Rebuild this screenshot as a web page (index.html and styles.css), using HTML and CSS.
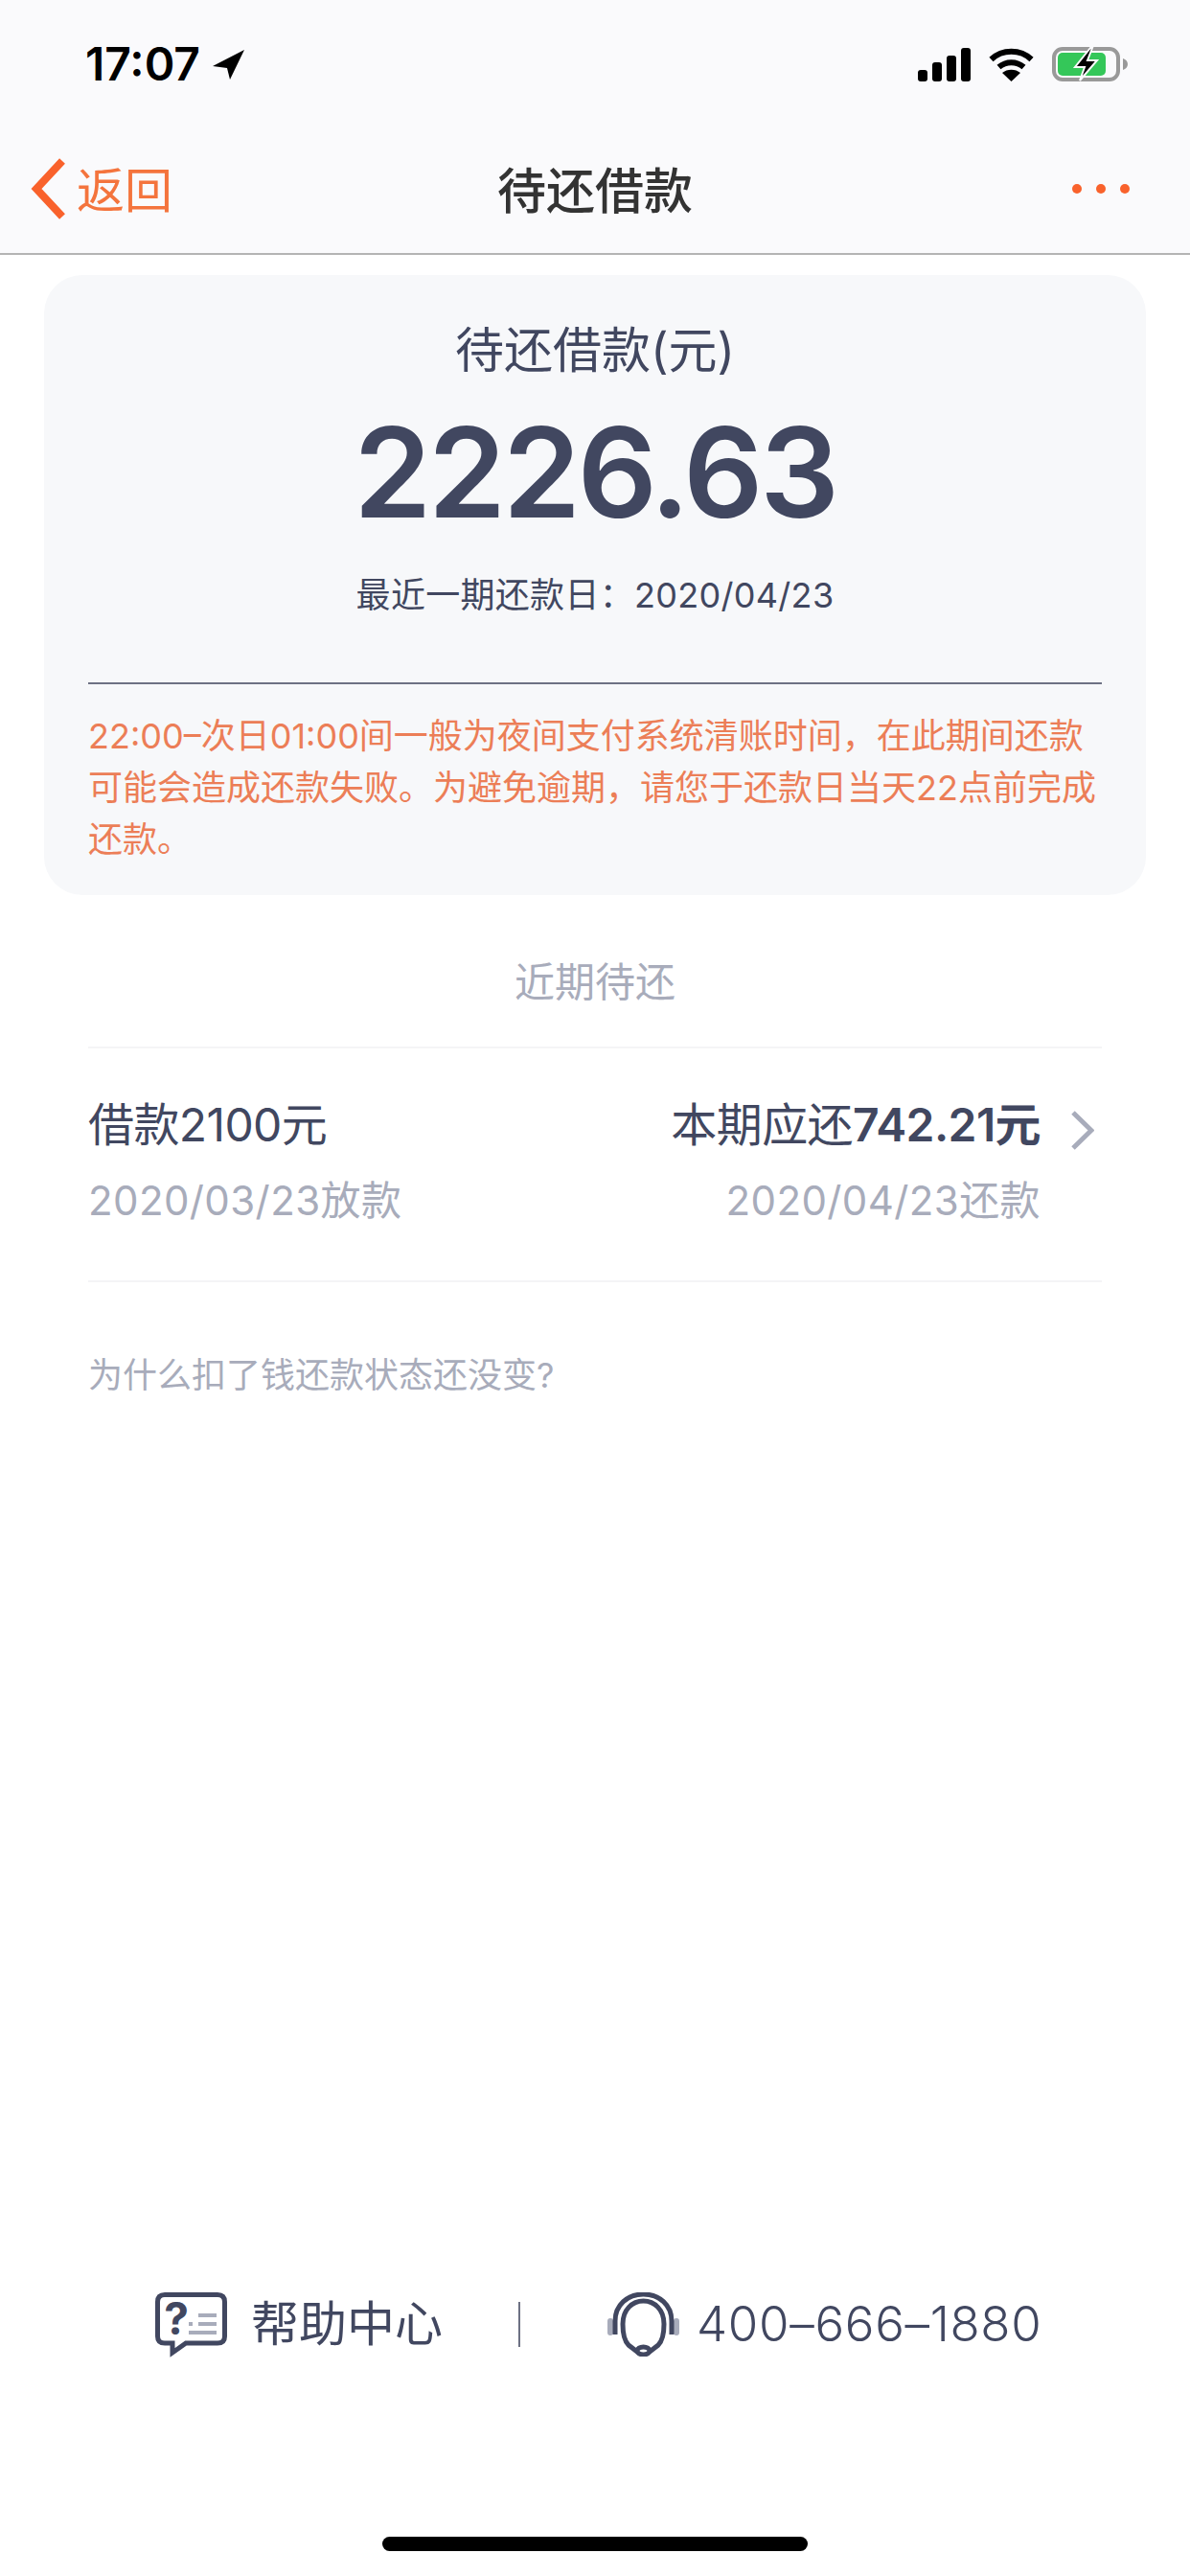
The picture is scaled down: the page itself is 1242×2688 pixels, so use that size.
FILE: index.html
```html
<!DOCTYPE html>
<html lang="zh">
<head>
<meta charset="utf-8">
<title>待还借款</title>
<link rel="stylesheet" href="styles.css">
</head>
<body>
<div class="page">
  <header class="header">
    <div class="status">
      <div class="status-left">
        <span class="time">17:07</span>
        <svg class="loc" viewBox="0 0 33 31"><path d="M33 0 L0 17 L15 19 L18 31 Z"/></svg>
      </div>
      <div class="status-right">
        <svg class="signal" viewBox="0 0 55 35"><rect x="0" y="23" width="10" height="12" rx="3"/><rect x="15" y="15" width="10" height="20" rx="3"/><rect x="30" y="8" width="10" height="27" rx="3"/><rect x="45" y="0" width="10" height="35" rx="3"/></svg>
        <svg class="wifi" viewBox="0 0 47 36"><path d="M2.5 13 C14 2 33 2 44.5 13" class="wifi-arc"/><path d="M10.5 21 C18 14.5 29 14.5 36.5 21" class="wifi-arc"/><path d="M23.5 36 L14 27 C19 22.500 28 22.500 33 27 Z"/></svg>
        <svg class="battery" viewBox="0 0 79 36">
          <rect x="2" y="2" width="67" height="32" rx="9" class="bat-frame"/>
          <rect x="6" y="6" width="50" height="24" rx="5" class="bat-fill"/>
          <path d="M74 12 C77 13 79 15 79 18 C79 21 77 23 74 24 Z" class="bat-cap"/>
          <path d="M40 1 L24 21 L34 21 L29 35 L47 14 L37 14 L42 1 Z" class="bat-bolt"/>
        </svg>
      </div>
    </div>
    <nav class="nav">
      <div class="back">
        <svg class="back-icon" viewBox="0 0 38 64"><path d="M33 3 L6 32 L33 61"/></svg>
        <span class="back-text">返回</span>
      </div>
      <h1 class="nav-title">待还借款</h1>
      <div class="more"><i></i><i></i><i></i></div>
    </nav>
  </header>

  <main class="main">
    <section class="card">
      <div class="card-title">待还借款(元)</div>
      <div class="amount">2226.63</div>
      <div class="due">最近一期还款日：2020/04/23</div>
      <div class="card-rule"></div>
      <p class="notice">22:00–次日01:00间一般为夜间支付系统清账时间，在此期间还款可能会造成还款失败。为避免逾期，请您于还款日当天22点前完成还款。</p>
    </section>

    <h2 class="section-title">近期待还</h2>

    <section class="loan">
      <div class="loan-left">
        <div class="loan-main">借款2100元</div>
        <div class="loan-sub">2020/03/23放款</div>
      </div>
      <div class="loan-right">
        <div class="loan-right-text">
          <div class="loan-main">本期应还<b>742.21元</b></div>
          <div class="loan-sub">2020/04/23还款</div>
        </div>
        <svg class="chevron" viewBox="0 0 25 41"><path d="M3 2 L22 20.500 L3 39"/></svg>
      </div>
    </section>

    <p class="question">为什么扣了钱还款状态还没变?</p>
  </main>

  <footer class="footer">
    <div class="foot-item">
      <svg class="help-icon" viewBox="0 0 75 67">
        <path d="M10 2.500 H65 Q72.500 2.500 72.500 10 V46 Q72.500 53 65 53 H32 L18 63 V53 H10 Q2.500 53 2.500 46 V10 Q2.500 2.500 10 2.500 Z" class="icon-line"/>
        <text x="22" y="44" class="help-q">?</text>
        <rect x="45" y="22" width="19" height="4" class="icon-soft"/>
        <rect x="35" y="31" width="4" height="4" class="icon-soft"/>
        <rect x="45" y="31" width="19" height="4" class="icon-soft"/>
        <rect x="35" y="40" width="29" height="4" class="icon-soft"/>
      </svg>
      <span class="foot-text">帮助中心</span>
    </div>
    <div class="foot-rule"></div>
    <div class="foot-item">
      <svg class="head-icon" viewBox="0 0 75 67">
        <rect x="0" y="27" width="6" height="18" rx="3" class="icon-soft"/>
        <rect x="69" y="27" width="6" height="18" rx="3" class="icon-soft"/>
        <path d="M8 44 V30 C8 13 21 2 37.500 2 C54 2 67 13 67 30 V44" class="icon-line"/>
        <path d="M31 62 L22 55 C17 50 16 42 16 33 C16 18 26 9 37.500 9 C49 9 59 18 59 33 C59 42 58 50 53 55 L44 62" class="icon-line"/>
        <ellipse cx="37.500" cy="61" rx="6.500" ry="4" class="icon-line"/>
      </svg>
      <span class="foot-phone">400–666–1880</span>
    </div>
  </footer>

  <div class="home"></div>
</div>
</body>
</html>
```

FILE: styles.css
```css
* { box-sizing: border-box; }
html, body { margin: 0; padding: 0; background: #fff; }
body {
  font-family: Inter, "Noto Sans CJK SC", sans-serif;
  color: #414760;
}
.page {
  width: 1242px;
  height: 2688px;
  display: flex;
  flex-direction: column;
  overflow: hidden;
}

/* header */
.header { background: #fafafc; border-bottom: 2px solid #b4b4b4; height: 266px; }
.status {
  height: 132px;
  display: flex;
  justify-content: space-between;
  padding: 49px 65px 0 89px;
}
.status-left { display: flex; align-items: flex-start; }
.time {
  font-size: 48px;
  font-weight: 600;
  line-height: 36px;
  color: #000;
}
.loc { width: 33px; height: 31px; margin: 3px 0 0 13px; fill: #000; }
.status-right { display: flex; align-items: flex-start; }
.signal { width: 55px; height: 35px; margin-top: 1px; fill: #000; }
.wifi { width: 47px; height: 36px; margin-left: 19px; fill: #000; }
.wifi-arc { fill: none; stroke: #000; stroke-width: 6; }
.battery { width: 79px; height: 36px; margin-left: 19px; }
.bat-frame { fill: none; stroke: #999; stroke-width: 4; }
.bat-fill { fill: #34c759; }
.bat-cap { fill: #999; }
.bat-bolt { fill: #000; stroke: #fafafc; stroke-width: 2; }

.nav {
  position: relative;
  height: 132px;
  display: flex;
  align-items: center;
  justify-content: space-between;
  padding: 0 63px 2px 32px;
}
.back { display: flex; align-items: center; color: #f4743d; }
.back-icon { width: 38px; height: 64px; fill: none; stroke: #f9622c; stroke-width: 8; }
.back-text { font-size: 50px; line-height: 64px; margin: 4px 0 0 10px; color: #f4743d; }
.nav-title {
  position: absolute;
  left: 0;
  right: 0;
  top: 0;
  bottom: 4px;
  margin: 0;
  display: flex;
  align-items: center;
  justify-content: center;
  font-size: 51px;
  font-weight: 500;
  color: #333;
}
.more { display: flex; gap: 15px; }
.more i { display: block; width: 10px; height: 10px; border-radius: 50%; background: #f9622c; }

/* main */
.main { padding: 21px 46px 0; }
.card {
  background: #f7f8fa;
  border-radius: 40px;
  padding: 44px 46px 31px;
  text-align: center;
}
.card-title { font-size: 51px; line-height: 70px; }
.amount {
  font-size: 130px;
  line-height: 160px;
  font-weight: 560;
  letter-spacing: -3.2px;
  margin-top: 12px;
  color: #414760;
}
.due { font-size: 36px; line-height: 50px; margin-top: 23px; letter-spacing: 0.3px; }
.card-rule { height: 2px; background: #6d7183; margin-top: 66px; }
.notice {
  margin: 27px 0 0;
  font-size: 36px;
  line-height: 54px;
  color: #ec7e57;
  text-align: left;
}
.section-title {
  margin: 61px 0 0;
  font-size: 42px;
  line-height: 60px;
  font-weight: 400;
  text-align: center;
  color: #a8acbb;
}
.loan {
  margin: 37px 46px 0;
  padding: 45px 8px 54px 0;
  height: 246px;
  display: flex;
  justify-content: space-between;
  border-top: 2px solid #f4f4f6;
  border-bottom: 2px solid #f4f4f6;
}
.loan-main { font-size: 48px; line-height: 70px; letter-spacing: -0.6px; }
.loan-main b { font-weight: 600; }
.loan-sub { font-size: 42px; line-height: 60px; margin-top: 14px; letter-spacing: 0.4px; color: #a8acbb; }
.loan-right { display: flex; align-items: flex-start; }
.loan-right-text { text-align: right; }
.chevron {
  width: 25px;
  height: 41px;
  margin: 20px 0 0 31px;
  fill: none;
  stroke: #a8acbb;
  stroke-width: 5;
}
.question {
  margin: 72px 46px 0;
  font-size: 36px;
  line-height: 50px;
  color: #a8acbb;
}

/* footer */
.footer {
  margin-top: auto;
  display: flex;
  align-items: center;
  padding-left: 162px;
  height: 74px;
}
.foot-item { display: flex; align-items: center; }
.help-icon { width: 75px; height: 67px; overflow: visible; }
.head-icon { width: 75px; height: 67px; }
.icon-line { fill: none; stroke: #414760; stroke-width: 5; }
.icon-soft { fill: #a8acbb; }
.help-q { font-size: 46px; font-weight: 700; text-anchor: middle; fill: #414760; }
.foot-text { font-size: 50px; line-height: 74px; margin-left: 25px; }
.foot-rule { width: 2px; height: 47px; background: #6d7183; margin: 0 91px 0 79px; }
.foot-phone { font-size: 51px; font-weight: 350; letter-spacing: 0.7px; line-height: 74px; margin-left: 18px; }

.home {
  width: 444px;
  height: 15px;
  border-radius: 8px;
  background: #000;
  margin: 185px auto 26px;
}
```
